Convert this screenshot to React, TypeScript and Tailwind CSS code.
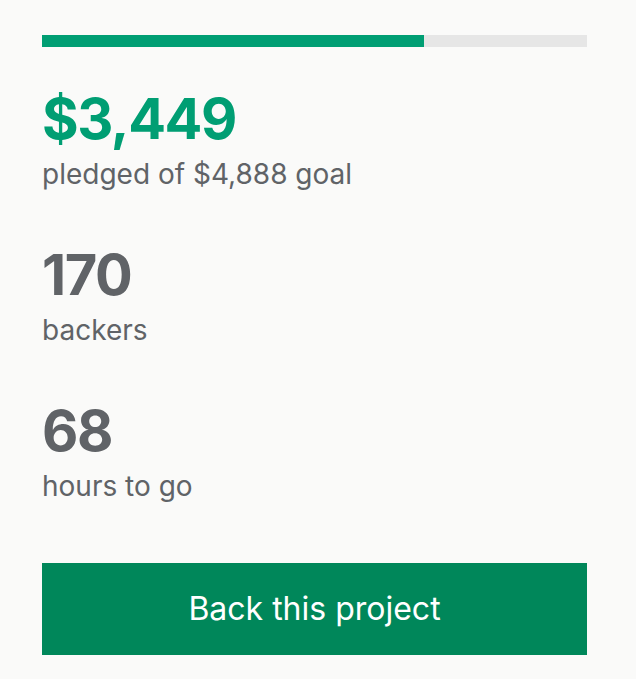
import React from "react";

const stats = [
  { value: "170", label: "backers" },
  { value: "68", label: "hours to go" },
];

export default function App() {
  const pledged = 3449;
  const goal = 4888;
  const pct = Math.min(100, Math.floor((pledged / goal) * 100));

  return (
    <div className="min-h-[679px] w-[636px] bg-[#fafaf9] px-[42px] pt-[35px] font-['Inter',sans-serif] text-[#606367]">
      <div className="w-[545px]">
        <div className="h-[12px] w-full bg-[#e6e6e6]">
          <div className="h-full bg-[#009e73]" style={{ width: `${pct}%` }} />
        </div>

        <div className="mt-[44px]">
          <div className="text-[56px] font-bold leading-[56px] tracking-[-0.025em] text-[#009e73]">$3,449</div>
          <div className="mt-[11px] text-[28px] leading-[33px]">pledged of $4,888 goal</div>
        </div>

        {stats.map((s) => (
          <div key={s.label} className="mt-[56px]">
            <div className="text-[56px] font-bold leading-[56px] tracking-[-0.025em]">{s.value}</div>
            <div className="mt-[11px] text-[28px] leading-[33px]">{s.label}</div>
          </div>
        ))}

        <button className="mt-[60px] flex h-[92px] w-full items-center justify-center bg-[#00875a] text-[32px] text-white">
          Back this project
        </button>
      </div>
    </div>
  );
}
